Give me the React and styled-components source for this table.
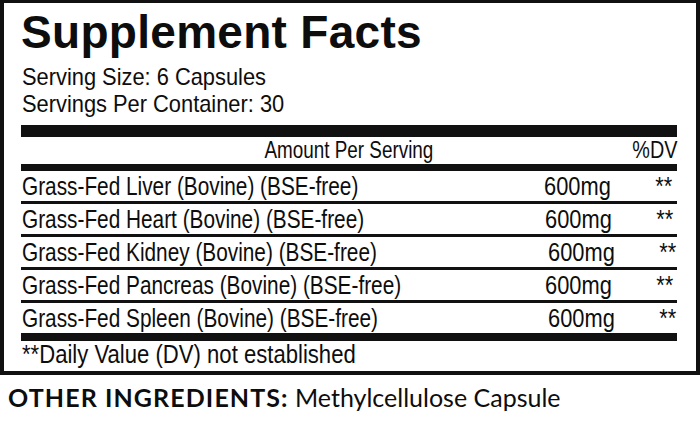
import styled, { createGlobalStyle } from "styled-components";

const GlobalStyle = createGlobalStyle`
	body {
		margin: 0;
		background: #fff;
	}
`;

// the label sets its copy in a condensed face; no narrow font is installed,
// so a regular face is squeezed horizontally instead
const ingredients = [
	{ name: "Grass-Fed Liver (Bovine) (BSE-free)", amount: "600mg", nudge: 0 },
	{ name: "Grass-Fed Heart (Bovine) (BSE-free)", amount: "600mg", nudge: 1 },
	{ name: "Grass-Fed Kidney (Bovine) (BSE-free)", amount: "600mg", nudge: 4 },
	{ name: "Grass-Fed Pancreas (Bovine) (BSE-free)", amount: "600mg", nudge: 1 },
	{ name: "Grass-Fed Spleen (Bovine) (BSE-free)", amount: "600mg", nudge: 4 },
];

export default function App() {
	return (
		<>
			<GlobalStyle />
			<Page>
				<Label>
					<Title>Supplement Facts</Title>
					<ServingInfo>
						<Line>
							<Squeeze $k={0.91}>Serving Size: 6 Capsules</Squeeze>
						</Line>
						<Line>
							<Squeeze $k={0.91}>Servings Per Container: 30</Squeeze>
						</Line>
					</ServingInfo>
					<Bar $size={12} />
					<HeaderRow>
						<span />
						<HeaderCell>
							<Squeeze $k={0.82} $origin="center">
								Amount Per Serving
							</Squeeze>
						</HeaderCell>
						<HeaderCell $right>
							<Squeeze $k={0.86} $origin="right">
								%DV
							</Squeeze>
						</HeaderCell>
					</HeaderRow>
					<Bar $size={7} />
					{ingredients.map((item, i) => (
						<Row key={item.name} $last={i === ingredients.length - 1}>
							<span>
								<Squeeze $k={0.8}>{item.name}</Squeeze>
							</span>
							<Amount $nudge={item.nudge}>
								<Squeeze $k={0.84}>{item.amount}</Squeeze>
							</Amount>
							<Stars $nudge={item.nudge}>
								<Squeeze $k={0.84} $origin="right">
									**
								</Squeeze>
							</Stars>
						</Row>
					))}
					<Bar $size={8} />
					<Footnote>
						<Squeeze $k={0.85}>**Daily Value (DV) not established</Squeeze>
					</Footnote>
				</Label>
				<Other>
					<strong>OTHER INGREDIENTS:</strong> Methylcellulose Capsule
				</Other>
			</Page>
		</>
	);
}

const Page = styled.main`
	width: 700px;
	height: 423px;
	overflow: hidden;
	background: #fff;
	color: #0d0d0d;
`;

const Label = styled.section`
	box-sizing: border-box;
	width: 700px;
	border: 4px solid #111;
	border-top-width: 3px;
	padding: 6px 19px 2px 17px;
	font-family: "Liberation Sans", Arial, sans-serif;
`;

const Squeeze = styled.span`
	display: inline-block;
	white-space: nowrap;
	transform: scaleX(${(p) => p.$k});
	transform-origin: ${(p) => p.$origin || "left"} center;
`;

const Title = styled.h1`
	margin: 0;
	font-weight: 700;
	font-size: 46px;
	line-height: 46px;
	letter-spacing: 0.3px;
`;

const ServingInfo = styled.div`
	margin-top: 9px;
	margin-bottom: 8px;
	padding-left: 1px;
`;

const Line = styled.div`
	font-size: 24px;
	line-height: 26.5px;
`;

const Bar = styled.div`
	height: ${(p) => p.$size}px;
	background: #111;
`;

const HeaderRow = styled.div`
	display: grid;
	grid-template-columns: 1fr auto 1fr;
	height: 27px;
`;

const HeaderCell = styled.span`
	font-size: 23px;
	line-height: 27px;
	text-align: ${(p) => (p.$right ? "right" : "center")};
`;

const Row = styled.div`
	display: grid;
	grid-template-columns: 522px 100px 1fr;
	height: 30px;
	padding-left: 1px;
	font-size: 26px;
	line-height: 30px;
	border-bottom: ${(p) => (p.$last ? "none" : "3px solid #111")};
`;

const Amount = styled.span`
	padding-left: ${(p) => p.$nudge}px;
`;

const Stars = styled.span`
	text-align: right;
	padding-right: ${(p) => 5 - p.$nudge}px;
`;

const Footnote = styled.div`
	padding-left: 1px;
	font-size: 26px;
	line-height: 27px;
	padding-bottom: 1px;
`;

const Other = styled.p`
	margin: 0;
	padding: 7px 0 0 8px;
	font-family: Lato, "Open Sans", sans-serif;
	font-size: 25px;
	line-height: 30px;
	font-weight: 400;

	strong {
		font-weight: 700;
		letter-spacing: 1.1px;
	}
`;
